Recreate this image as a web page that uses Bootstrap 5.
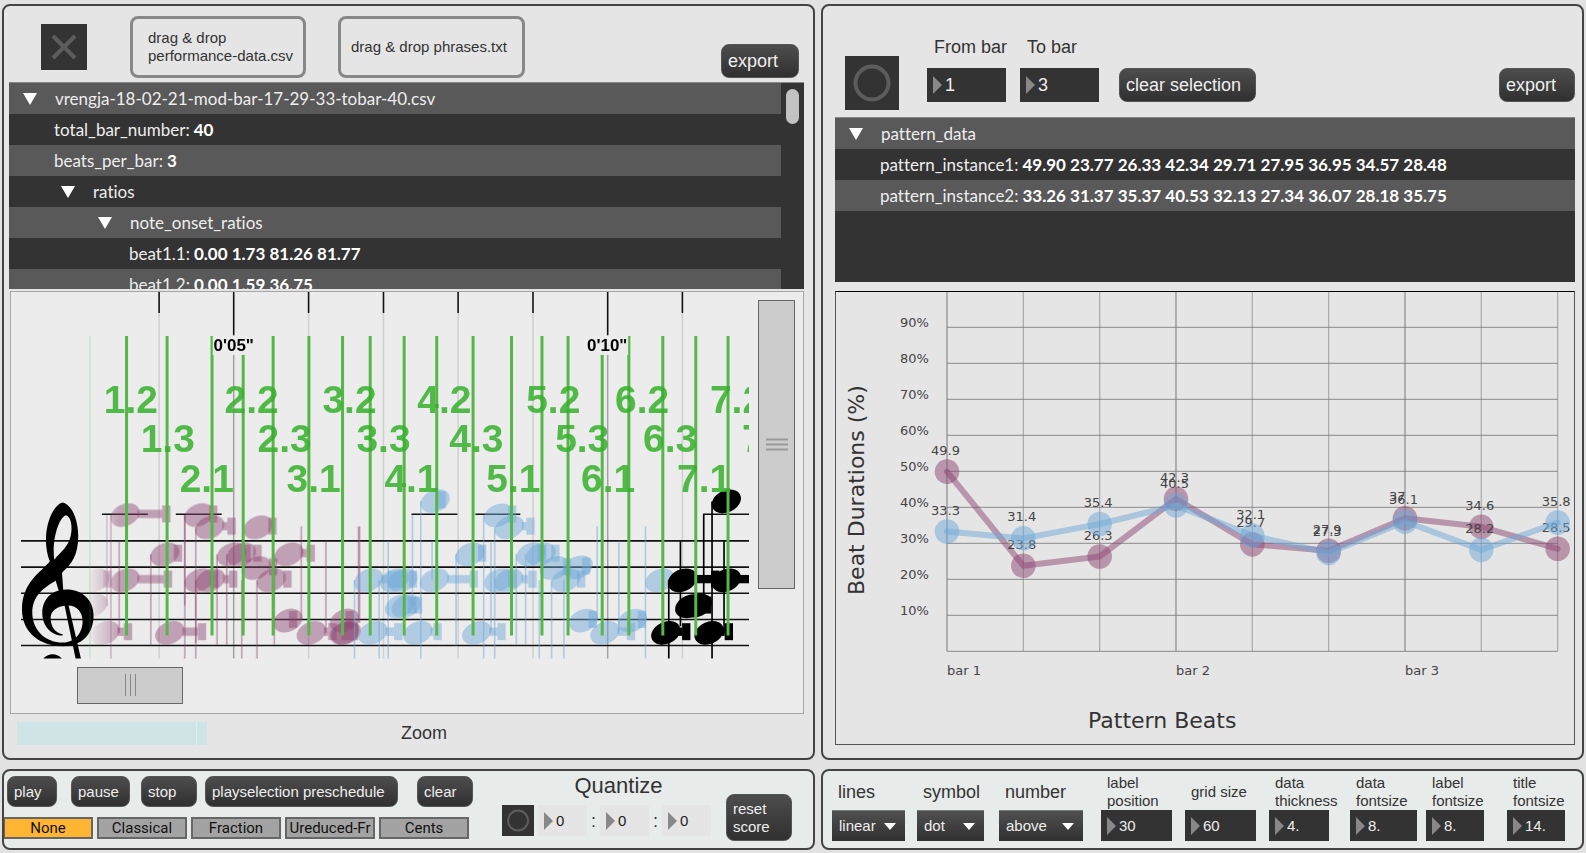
<!DOCTYPE html>
<html lang="en">
<head>
<meta charset="utf-8">
<meta name="viewport" content="width=device-width, initial-scale=1">
<title>Pattern Beats</title>
<link href="https://cdn.jsdelivr.net/npm/bootstrap@5.3.0/dist/css/bootstrap.min.css" rel="stylesheet">
<style>
  :root { --ink:#333; --dark:#333; --stripe:#595959; --pale:#e5e5e5; }
  body { background:#e2e2e2; color:var(--ink); font-family:"Liberation Sans",Arial,sans-serif; font-size:15px; line-height:18px; }
  .patch { display:grid; grid-template-columns:813fr 763fr; column-gap:6px; row-gap:9px; padding:4px 2px 3px; }
  .pane { border:2px solid #444; border-radius:8px; background:var(--pale); min-width:0; overflow:hidden; }
  .pane-low { background:#e7ebe9; height:81px; }
  .pane-score { padding:0 9px 0 5px; }
  .pane-chart { padding:0 7px 0 12px; }

  .fs-big { font-size:18px; line-height:22px; }
  .fs-head { font-size:22px; line-height:22px; }

  .btn-max { --bs-btn-color:#eee; --bs-btn-hover-color:#fff; --bs-btn-active-color:#fff; --bs-btn-border-color:#555;
    --bs-btn-padding-x:6px; --bs-btn-padding-y:0; --bs-btn-border-radius:8px; --bs-btn-font-size:15px; --bs-btn-line-height:18px;
    background:linear-gradient(#4d4d4d,#303030); text-align:left; height:31px; white-space:nowrap; flex:none; }
  .btn-max.tall { --bs-btn-font-size:18px; height:34px; }
  .sq { background:var(--dark); border:0; padding:0; flex:none; display:block; }
  .sq svg { display:block; width:100%; height:100%; }
  .sq46 { width:46px; height:46px; } .sq54 { width:54px; height:54px; } .sq32 { width:32px; height:31px; }

  .score-head { padding:10px 5px 4px 32px; height:76px; }
  .dropzone { border:3px solid #888; border-radius:8px; padding:0 7px 0 15px; height:62px; display:flex; align-items:center; white-space:nowrap; }
  .dropzone.one { width:176px; } .dropzone.two { width:187px; padding-left:10px; }
  .g-a { margin-left:43px; } .g-b { margin-left:32px; }

  .tree { background:var(--dark); color:#eee; font-family:Lato,sans-serif; font-size:17px; line-height:31px; display:flex; overflow:hidden; border-top:1px solid #888; font-variant-ligatures:none; }
  .tree ul { flex:1; list-style:none; margin:0; padding:0; }
  .tree li { height:31px; white-space:nowrap; display:flex; align-items:center; padding-left:45px; }
  .tree li:nth-child(odd) { background:var(--stripe); }
  .tree b { font-weight:700; color:#fff; margin-left:4px; }
  .tree .fold { border:0; background:none; padding:0; width:32px; height:31px; display:flex; align-items:center; }
  .tree li.d0 { padding-left:14px; } .tree li.d1 { padding-left:52px; } .tree li.d2 { padding-left:89px; } .tree li.leaf3 { padding-left:120px; }
  .tree-a { height:207px; } .tree-b { height:165px; }
  .track { width:23px; padding:6px 5px; }
  .track div { height:35px; border-radius:7px; background:#c2c2c2; }

  .score { border:1px solid #a5a5a5; background:#ececec; margin:2px 0 0 1px; height:423px; }
  .score-svg { flex:1 1 0; min-width:0; display:block; }
  .vtrack { width:54px; flex:none; padding:8px 8px 0 9px; }
  .thumb { background:#ccc; border:1px solid #666; display:flex; align-items:center; justify-content:center; }
  .thumb.v { height:289px; } .thumb.h { height:37px; width:106px; margin:8px 0 0 66px; }
  .region { width:190px; height:23px; background:#cfe4e7; margin-left:8px; }
  .region::after { content:""; display:block; width:1px; height:100%; background:#dfeeee; margin-left:179px; }
  .zoom-row { height:44px; padding-bottom:6px; gap:194px; }

  .chart-head { height:111px; padding:0 0 7px 10px; }
  .chart-head label { display:block; margin-bottom:10px; padding-left:7px; }
  .g-c { margin-left:28px; } .g-d { margin-left:13px; } .g-e { margin-left:20px; }
  .numbox { background:var(--dark); display:flex; align-items:center; gap:1px; padding-left:6px; height:31px; }
  .numbox svg { flex:none; }
  .numbox input { background:none; border:0; padding:0 0 0 2px; color:#eee; width:100%; min-width:0; }
  .numbox.big { width:79px; height:34px; font-size:18px; }
  .numbox.pale { background:#e5e5e5; } .numbox.pale input { color:#222; }
  .chart { border:1px solid #555; border-top-color:#000; margin-top:9px; }
  .chart svg { display:block; width:100%; }

  .transport { padding:5px 0 0 3px; }
  .transport .btn-row { height:31px; }
  .w50 { width:50px; } .w59 { width:59px; } .w56 { width:56px; } .w193 { width:193px; } .w76 { width:76px; } .w137 { width:137px; }
  .l14 { margin-left:14px; } .l11 { margin-left:11px; } .l8 { margin-left:8px; } .l19 { margin-left:19px; }
  .modes { margin:10px 0 0 -4px; gap:4px; }
  .modes .btn { --bs-btn-padding-x:0; --bs-btn-padding-y:0; --bs-btn-border-radius:0; --bs-btn-color:#111; --bs-btn-bg:#a3a3a3; --bs-btn-border-color:#666;
    --bs-btn-active-bg:#ffb532; --bs-btn-active-color:#111; --bs-btn-active-border-color:#666; --bs-btn-line-height:18px; --bs-btn-font-size:15px;
    border-width:2px; font-family:Roboto,sans-serif; width:90px; height:22px; white-space:nowrap; }
  .quant { width:209px; margin-left:29px; }
  .quant .numbox { width:49px; padding-left:6px; }
  .g-f { margin:23px 0 0 15px; }
  .btn-max.reset { width:66px; height:47px; line-height:18px; }

  .opts { display:grid; grid-template-columns:85fr 82fr 102fr 84fr 84fr 81fr 76fr 81fr 58fr; padding:3px 17px 0 9px; }
  .opts label { height:36px; display:flex; align-items:center; white-space:nowrap; padding-left:6px; }
  .opts .sel { appearance:none; border:0; border-top:1px solid #777; color:#eee; height:31px; padding:0 0 0 7px; font-size:15px; border-radius:0; display:block;
    background:url("data:image/svg+xml,%3Csvg xmlns='http://www.w3.org/2000/svg' width='12' height='7'%3E%3Cpath d='M0 0h12l-6 7z' fill='%23fff'/%3E%3C/svg%3E") right 9px center no-repeat, linear-gradient(#505050,#303030); }
  .w73 { width:73px; } .w67 { width:67px; } .w84 { width:84px; } .w71 { width:71px; } .w60 { width:60px; } .w58 { width:58px; } .w78 { width:78px; }
</style>
</head>
<body>
<main class="patch">

  <section class="pane pane-score">
    <div class="score-head d-flex align-items-center">
      <button class="sq sq46" aria-label="toggle"><svg viewBox="0 0 46 46"><path d="M12 12 34 34M34 12 12 34" stroke="#5c5c5c" stroke-width="4"/></svg></button>
      <div class="dropzone one g-a">drag &amp; drop<br>performance-data.csv</div>
      <div class="dropzone two g-b">drag &amp; drop phrases.txt</div>
      <button class="btn btn-max tall w78 ms-auto align-self-end">export</button>
    </div>

    <div class="tree tree-a">
      <ul>
        <li class="d0"><button class="fold" aria-label="fold"><svg width="14" height="12"><path d="M0 0h14L7 12z" fill="#fff"/></svg></button>vrengja-18-02-21-mod-bar-17-29-33-tobar-40.csv</li>
        <li>total_bar_number: <b>40</b></li>
        <li>beats_per_bar: <b>3</b></li>
        <li class="d1"><button class="fold" aria-label="fold"><svg width="14" height="12"><path d="M0 0h14L7 12z" fill="#fff"/></svg></button>ratios</li>
        <li class="d2"><button class="fold" aria-label="fold"><svg width="14" height="12"><path d="M0 0h14L7 12z" fill="#fff"/></svg></button>note_onset_ratios</li>
        <li class="leaf3">beat1.1: <b>0.00 1.73 81.26 81.77</b></li>
        <li class="leaf3">beat1.2: <b>0.00 1.59 36.75</b></li>
      </ul>
      <div class="track"><div></div></div>
    </div>

    <div class="score">
      <div class="d-flex align-items-start">
        <svg id="score" class="score-svg" viewBox="11 292 739 367" role="img" aria-label="score">
          <defs><linearGradient id="fade" gradientUnits="userSpaceOnUse" x1="265" x2="360" y1="0" y2="0"><stop offset="0" stop-color="#000"/><stop offset="1" stop-color="#fff"/></linearGradient>
          <mask id="fadeMask" maskUnits="userSpaceOnUse" x="0" y="-100" width="1300" height="900"><rect y="-100" width="1300" height="900" fill="url(#fade)"/></mask></defs>
          <g id="ticks"></g>
          <g id="staff" stroke="#111" stroke-width="1.6"></g>
          <g transform="translate(0 480) scale(.33333)">
            <path fill="#000" fill-rule="evenodd" d="M150 245C120 280 66 310 66 390C66 460 120 500 190 500C245 500 281 465 281 408C281 360 245 330 200 330C150 330 127 365 127 400C127 440 155 468 188 468L188 464C165 460 152 440 152 415C152 395 170 380 200 378C232 376 248 400 248 425C248 460 225 489 190 489C130 489 97 445 97 400C97 350 130 325 165 305C180 292 184 288 188 277C215 255 235 225 235 170C235 120 215 72 187 68C160 76 138 130 138 180C138 210 145 235 150 245ZM163 240C156 190 172 120 197 107C215 110 218 145 212 170C206 200 182 218 163 240Z"/>
            <path fill="#000" d="M150 242 162 238 186 277 190 332 206 378 243 537H227L194 378 176 332 163 290ZM130 537Q158 512 186 537Z"/>
            <g id="purple" mask="url(#fadeMask)"></g>
          </g>
          <g transform="translate(400 480) scale(.33333)"><g id="blue"></g><g id="black"></g></g>
          <g id="beats"></g>
        </svg>
        <div class="vtrack"><div class="thumb v" role="scrollbar" aria-orientation="vertical" aria-controls="score" aria-valuenow="0"><svg width="22" height="13"><path d="M0 1.500h22M0 6.500h22M0 11.500h22" stroke="#999" stroke-width="2"/></svg></div></div>
      </div>
      <div class="thumb h" role="scrollbar" aria-controls="score" aria-valuenow="0"><svg width="13" height="22"><path d="M1.500 0v22M6.500 0v22M11.500 0v22" stroke="#888" stroke-width="1"/></svg></div>
    </div>

    <div class="zoom-row d-flex align-items-center"><div class="region"></div><span class="fs-big">Zoom</span></div>
  </section>

  <section class="pane pane-chart">
    <div class="chart-head d-flex align-items-end">
      <button class="sq sq54" aria-label="bang"><svg viewBox="0 0 54 54"><circle cx="27" cy="27" r="16.500" fill="none" stroke="#5c5c5c" stroke-width="4"/></svg></button>
      <div class="g-c mb-2"><label for="from" class="fs-big">From bar</label>
        <div class="numbox big"><svg width="9" height="18"><path d="M0 0 9 9 0 18z" fill="#888"/></svg><input id="from" value="1"></div></div>
      <div class="g-d mb-2"><label for="to" class="fs-big">To bar</label>
        <div class="numbox big"><svg width="9" height="18"><path d="M0 0 9 9 0 18z" fill="#888"/></svg><input id="to" value="3"></div></div>
      <button class="btn btn-max tall w137 g-e mb-2">clear selection</button>
      <button class="btn btn-max tall w76 ms-auto mb-2">export</button>
    </div>

    <div class="tree tree-b">
      <ul>
        <li class="d0"><button class="fold" aria-label="fold"><svg width="14" height="12"><path d="M0 0h14L7 12z" fill="#fff"/></svg></button>pattern_data</li>
        <li>pattern_instance1: <b>49.90 23.77 26.33 42.34 29.71 27.95 36.95 34.57 28.48</b></li>
        <li>pattern_instance2: <b>33.26 31.37 35.37 40.53 32.13 27.34 36.07 28.18 35.75</b></li>
      </ul>
    </div>

    <div class="chart"><svg id="chart" viewBox="836 292 738 452" role="img" aria-label="Beat durations by pattern beat" font-family="DejaVu Sans, Verdana, sans-serif" fill="#444"></svg></div>
  </section>

  <section class="pane pane-low d-flex">
    <div class="transport">
      <div class="btn-row d-flex">
        <button class="btn btn-max w50">play</button>
        <button class="btn btn-max w59 l14">pause</button>
        <button class="btn btn-max w56 l11">stop</button>
        <button class="btn btn-max w193 l8">playselection preschedule</button>
        <button class="btn btn-max w56 l19">clear</button>
      </div>
      <div class="modes d-flex">
        <button class="btn active" aria-pressed="true">None</button>
        <button class="btn">Classical</button>
        <button class="btn">Fraction</button>
        <button class="btn">Ureduced-Fr</button>
        <button class="btn">Cents</button>
      </div>
    </div>
    <div class="quant">
      <div class="fs-head text-center ps-4 pt-1 mb-1">Quantize</div>
      <div class="d-flex align-items-center justify-content-between pt-1">
        <button class="sq sq32" aria-label="bang"><svg viewBox="0 0 32 31"><circle cx="16" cy="15.500" r="10" fill="none" stroke="#5c5c5c" stroke-width="2"/></svg></button>
        <div class="numbox pale"><svg width="9" height="18"><path d="M0 0 9 9 0 18z" fill="#888"/></svg><input aria-label="first" value="0"></div><span class="fs-big">:</span>
        <div class="numbox pale"><svg width="9" height="18"><path d="M0 0 9 9 0 18z" fill="#888"/></svg><input aria-label="second" value="0"></div><span class="fs-big">:</span>
        <div class="numbox pale"><svg width="9" height="18"><path d="M0 0 9 9 0 18z" fill="#888"/></svg><input aria-label="third" value="0"></div>
      </div>
    </div>
    <button class="btn btn-max reset g-f">reset<br>score</button>
  </section>

  <section class="pane pane-low opts">
    <div><label class="fs-big" for="o1">lines</label><select id="o1" class="sel w73"><option>linear</option></select></div>
    <div><label class="fs-big" for="o2">symbol</label><select id="o2" class="sel w67"><option>dot</option></select></div>
    <div><label class="fs-big" for="o3">number</label><select id="o3" class="sel w84"><option>above</option></select></div>
    <div><label for="o4">label<br>position</label><div class="numbox w71"><svg width="9" height="18"><path d="M0 0 9 9 0 18z" fill="#888"/></svg><input id="o4" value="30"></div></div>
    <div><label for="o5">grid size</label><div class="numbox w71"><svg width="9" height="18"><path d="M0 0 9 9 0 18z" fill="#888"/></svg><input id="o5" value="60"></div></div>
    <div><label for="o6">data<br>thickness</label><div class="numbox w60"><svg width="9" height="18"><path d="M0 0 9 9 0 18z" fill="#888"/></svg><input id="o6" value="4."></div></div>
    <div><label for="o7">data<br>fontsize</label><div class="numbox w67"><svg width="9" height="18"><path d="M0 0 9 9 0 18z" fill="#888"/></svg><input id="o7" value="8."></div></div>
    <div><label for="o8">label<br>fontsize</label><div class="numbox w58"><svg width="9" height="18"><path d="M0 0 9 9 0 18z" fill="#888"/></svg><input id="o8" value="8."></div></div>
    <div><label for="o9">title<br>fontsize</label><div class="numbox w58"><svg width="9" height="18"><path d="M0 0 9 9 0 18z" fill="#888"/></svg><input id="o9" value="14."></div></div>
  </section>
</main>

<script src="https://cdn.jsdelivr.net/npm/bootstrap@5.3.0/dist/js/bootstrap.bundle.min.js"></script>
<script>
const put = (id, html) => { document.getElementById(id).innerHTML += html; };
const line = (x1, y1, x2, y2, extra) => `<line x1="${x1}" y1="${y1}" x2="${x2}" y2="${y2}" ${extra || ''}/>`;

/* time ruler: a long tick every five seconds */
let s = '';
[159.3, 234, 309, 384, 458.7, 533.7, 608.5, 683.3].forEach(x => {
  const major = x === 234 || x === 608.5;
  s += line(x, major ? 335 : 313, x, 659, `stroke="${major ? '#a2a2a2' : '#d0d0d0'}" stroke-width="1.5"`);
  s += line(x, 292, x, major ? 335 : 313, 'stroke="#111" stroke-width="1.6"');
});
put('ticks', s);

/* staff and ledger lines */
s = '';
[541.2, 567.5, 593.7, 620, 646].forEach(y => s += line(21, y, 750, y));
[[102, 148], [176, 222], [412, 458], [476, 521], [704, 750]].forEach(([a, b]) => s += line(a, 514.5, b, 514.5));
put('staff', s);

/* a note: head centre, and the right end of its duration bar */
const note = ([x, y, end]) => {
  let o = `<ellipse cx="${x}" cy="${y}" rx="46" ry="33" transform="rotate(-25 ${x} ${y})"/>`;
  if (end) {
    const barEnd = end - 24;
    if (barEnd > x + 38) o += `<rect x="${x + 38}" y="${y - 16}" width="${barEnd - x - 38}" height="25"/>`;
    o += `<rect x="${barEnd}" y="${y - 29}" width="25" height="51"/>`;
  }
  return o;
};
const layer = (id, color, alpha, notes, stems, w) => put(id,
  `<g fill="${color}" fill-opacity="${alpha}">${notes.map(note).join('')}</g>` +
  `<g stroke="${color}" stroke-opacity="${alpha}" stroke-width="${w}">${stems.map(([x, a, b]) => line(x, a, x, b)).join('')}</g>`);

layer('purple', '#8c4672', .46,
  [[375,106,511],[597,106,652],[630,143,707],[775,143,830],[495,224,546],[695,224,752],[725,224,785],[868,224,945],[770,265,832],
   [285,302,334],[375,302,516],[598,302,655],[632,302,712],[815,302,875],[279,378],[315,460,396],[510,460,618],[865,423,892],
   [935,460,1010],[1035,423,1062],[1035,460,1075],[1040,460,1050]],
  [[321,106,380],[333,106,537],[358,185,460],[453,224,498],[555,106,537],[555,106,378],[588,143,537],[588,302,490],[652,224,495],[681,224,495],
   [726,302,537],[772,302,537],[824,224,495],[905,140,420],[979,185,460],[1077,140,430],[1080,140,430]], 5);
layer('blue', '#6ea8d8', .48,
  [[107,64,138],[297,107,350],[330,143,405],[212,224,260],[395,224,440],[425,224,480],[465,265,515],[537,263,572],[-93,302,-10],[10,302,52],
   [-15,302,15],[105,302,235],[298,302,350],[328,302,411],[500,302,557],[20,380,67],[0,380,50],[-80,460,8],[55,460,126],[232,460,318],
   [553,423,592],[617,460,707],[700,423,740],[782,302]],
  [[39,105,380],[64,64,537],[98,185,300],[170,224,498],[253,107,537],[275,185,460],[286,143,537],[351,224,495],[379,224,495],[420,302,537],
   [457,302,537],[494,302,537],[594,140,420],[659,185,460],[739,140,537],[-135,302,537],[-61,302,537],[-34,185,537]], 5);
layer('black', '#000', 1,
  [[982,65],[850,302,960],[982,302,1080],[872,380,936],[895,378],[800,460,873],[930,460,1001]],
  [[844,185,440],[809,302,537],[914,103,380],[939,65,537],[975,185,460]], 5);

/* beat markers and their names */
s = line(90, 336, 90, 659, 'stroke="#4bb53f" stroke-opacity=".15" stroke-width="2"');
[126.7,167.3,212.3,243.5,273.5,309.3,343,370.7,404.7,437.3,473.7,512.2,542.7,568.8,603,629.7,663.7,696.7,729]
  .forEach(x => s += line(x, 336, x, 636, 'stroke="#55b748" stroke-width="3"'));
s += '<g fill="#35b02a" fill-opacity=".85" font-size="39" font-weight="700" text-anchor="middle">';
const rowOf = { 1: 492, 2: 413, 3: 452 };
[['1.2',131],['1.3',168],['2.1',207],['2.2',252],['2.3',285],['3.1',314],['3.2',350],['3.3',384],['4.1',412],['4.2',445],['4.3',477],
 ['5.1',514],['5.2',554],['5.3',583],['6.1',609],['6.2',643],['6.3',671],['7.1',705],['7.2',738],['7.3',770]]
  .forEach(([t, x]) => s += `<text x="${x}" y="${rowOf[t[2]]}">${t}</text>`);
s += '</g><g font-size="17" font-weight="700" text-anchor="middle" fill="#000">';
[[234, "0'05\""], [608, "0'10\""]].forEach(([x, t]) =>
  s += `<rect x="${x - 21}" y="336" width="42" height="19" fill="#ececec"/><text x="${x}" y="351">${t}</text>`);
put('beats', s + '</g>');

/* line chart */
const X = i => 947 + 76.33 * i, Y = v => 651.3 - 3.6 * v;
s = '';
for (let p = 0; p <= 90; p += 10) {
  s += line(947, Y(p), 1557.7, Y(p), 'stroke="#8a8a8a"');
  if (p) s += `<text x="900" y="${Y(p)}" font-size="13">${p}%</text>`;
}
for (let i = 0; i < 9; i++) s += line(X(i), 292, X(i), Y(0), `stroke="#777" stroke-opacity=".5" stroke-width="${i % 3 ? 1.3 : 2}"`);
[[[49.90,23.77,26.33,42.34,29.71,27.95,36.95,34.57,28.48], ['49.9','23.8','26.3','42.3','29.7','27.9','37','34.6','28.5'], '#8c4672'],
 [[33.26,31.37,35.37,40.53,32.13,27.34,36.07,28.18,35.75], ['33.3','31.4','35.4','40.5','32.1','27.3','36.1','28.2','35.8'], '#6ea8d8']]
.forEach(([d, names, c]) => {
  s += `<polyline points="${d.map((v, i) => X(i) + ',' + Y(v)).join(' ')}" fill="none" stroke="${c}" stroke-opacity=".5" stroke-width="6" stroke-linecap="round" stroke-linejoin="round"/>`;
  d.forEach((v, i) => s += `<circle cx="${X(i)}" cy="${Y(v)}" r="12.3" fill="${c}" fill-opacity=".5"/>`);
  names.forEach((t, i) => s += `<text x="${X(i) - 16}" y="${Y(d[i]) - 17}" font-size="13">${t}</text>`);
});
['bar 1', 'bar 2', 'bar 3'].forEach((t, i) => s += `<text x="${X(i * 3)}" y="675" font-size="13">${t}</text>`);
s += '<text x="1088" y="728" font-size="22" fill="#333">Pattern Beats</text>';
s += '<text transform="translate(864 595) rotate(-90)" font-size="22" fill="#333">Beat Durations (%)</text>';
put('chart', s);
</script>
</body>
</html>
